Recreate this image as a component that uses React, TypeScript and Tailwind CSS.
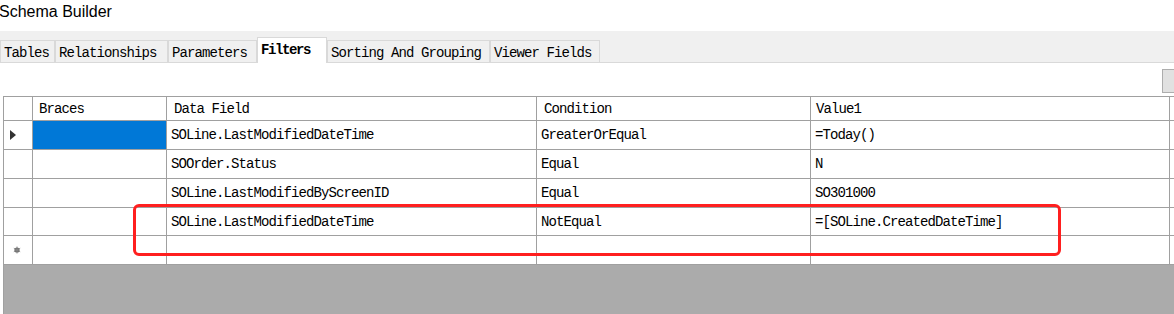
import React from "react";

type Row = {
  braces: string;
  field: string;
  condition: string;
  value: string;
};

const rows: Row[] = [
  { braces: "", field: "SOLine.LastModifiedDateTime", condition: "GreaterOrEqual", value: "=Today()" },
  { braces: "", field: "SOOrder.Status", condition: "Equal", value: "N" },
  { braces: "", field: "SOLine.LastModifiedByScreenID", condition: "Equal", value: "SO301000" },
  { braces: "", field: "SOLine.LastModifiedDateTime", condition: "NotEqual", value: "=[SOLine.CreatedDateTime]" },
];

const tabs = ["Tables", "Relationships", "Parameters", "Filters", "Sorting And Grouping", "Viewer Fields"];
const tabWidths = ["w-[55px]", "w-[113px]", "w-[89px]", "w-[70px]", "w-[163px]", "w-[110px]"];

const mono = "font-['Liberation_Mono',monospace] text-[14px] tracking-[-0.9px] text-black";
const gridCols = "grid grid-cols-[29px_134px_370px_274px_359px_1fr]";

function Cell({ children, className = "" }: { children?: React.ReactNode; className?: string }) {
  return (
    <div className={`flex items-center border-r border-[#a0a0a0] pl-[4px] whitespace-nowrap overflow-hidden ${className}`}>
      {children}
    </div>
  );
}

export default function App() {
  return (
    <div className="w-[1174px] h-[314px] bg-white overflow-hidden relative">
      {/* title */}
      <div className="h-[31px] -ml-[1px] pt-[2px] font-['Liberation_Sans',sans-serif] text-[16px] text-black leading-[20px]">
        Schema Builder
      </div>

      {/* tab strip */}
      <div className="h-[32px] bg-[#f0f0f0] border-b border-[#d9d9d9] flex items-end">
        {tabs.map((t, i) => {
          const active = t === "Filters";
          return (
            <div
              key={t}
              className={`${tabWidths[i]} flex items-center pl-[3px] ${mono} ${
                active
                  ? "h-[26px] bg-white border border-b-0 border-[#d9d9d9] -mb-[1px] pb-[1px] font-bold tracking-[-1.4px]"
                  : "h-[22px] bg-[#f0f0f0] border border-b-0 border-[#d9d9d9] pt-[3px]"
              }`}
            >
              {t}
            </div>
          );
        })}
      </div>

      {/* toolbar area */}
      <div className="h-[33px] flex justify-end items-start pt-[6px]">
        <div className="w-[12px] h-[24px] bg-[#e1e1e1] border border-[#adadad] border-r-0" />
      </div>

      {/* grid */}
      <div className="ml-[3px] border-t border-l border-[#a0a0a0] bg-[#ababab] h-[219px]">
        <div className={`${gridCols} h-[24px] bg-white border-b border-[#a0a0a0]`}>
          <Cell />
          <Cell className={`${mono} pl-[6px] pt-[1px]`}>Braces</Cell>
          <Cell className={`${mono} pl-[7px] pt-[1px]`}>Data Field</Cell>
          <Cell className={`${mono} pl-[7px] pt-[1px]`}>Condition</Cell>
          <Cell className={`${mono} pl-[5px] pt-[1px]`}>Value1</Cell>
          <div />
        </div>
        {rows.map((r, i) => (
          <div key={i} className={`${gridCols} ${i === 3 ? "h-[28px]" : "h-[29px]"} bg-white border-b border-[#a0a0a0]`}>
            <Cell className="pl-[6px]">
              {i === 0 && (
                <div className="w-0 h-0 border-y-[5px] border-y-transparent border-l-[6px] border-l-[#333]" />
              )}
            </Cell>
            <Cell className={i === 0 ? "bg-[#0078d7]" : ""}>{r.braces}</Cell>
            <Cell className={`${mono} pl-[3px] pt-[1px]`}>{r.field}</Cell>
            <Cell className={`${mono} pl-[2px] pt-[1px]`}>{r.condition}</Cell>
            <Cell className={`${mono} pl-[2px] pt-[1px]`}>{r.value}</Cell>
            <div />
          </div>
        ))}
        <div className={`${gridCols} h-[29px] bg-white border-b border-[#a0a0a0]`}>
          <Cell className="pl-[9px]">
            <svg width="8" height="8" viewBox="0 0 8 8">
              <circle cx="4" cy="4" r="2.6" fill="#6a6a6a" />
              <path d="M4 0.5V7.5M0.8 2.2L7.2 5.8M0.8 5.8L7.2 2.2" stroke="#8a8a8a" strokeWidth="0.9" />
            </svg>
          </Cell>
          <Cell />
          <Cell />
          <Cell />
          <Cell />
          <div />
        </div>
      </div>

      {/* red highlight */}
      <div className="absolute left-[133px] top-[204px] w-[928px] h-[52px] border-[3px] border-[#ff1f1f] rounded-[6px] pointer-events-none" />
    </div>
  );
}
